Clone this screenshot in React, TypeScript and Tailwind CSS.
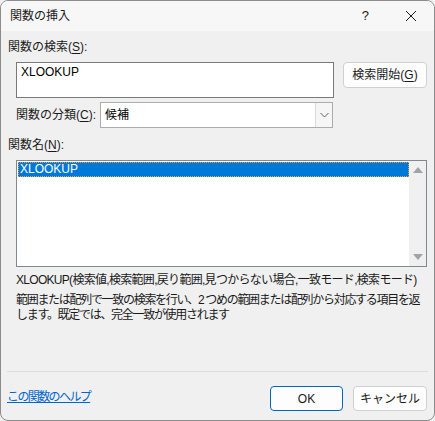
import React from 'react';

const font = { fontFamily: '"Liberation Sans", "Noto Sans CJK JP", sans-serif' };

// label with an underlined access key, e.g. 関数の検索(S):
const Label: React.FC<{ text: string; k: string; className?: string }> = ({ text, k, className = '' }) => (
  <div className={`text-[12px] leading-[15px] text-[#1a1a1a] whitespace-nowrap ${className}`}>
    {text}(<span className="underline underline-offset-2">{k}</span>):
  </div>
);

const App: React.FC = () => {
  return (
    <div className="w-[435px] h-[421px] bg-[#f0f0f0]" style={font}>
      <div className="w-full h-full flex flex-col border border-[#8c8c8c] rounded-[8px] overflow-hidden">
        {/* Title bar */}
        <div className="h-[30px] shrink-0 bg-[#f7f7f7] flex items-center pl-[9px] pr-[12px]">
          <span className="text-[12px] text-[#1a1a1a]">関数の挿入</span>
          <span className="ml-auto text-[13px] text-[#1a1a1a] mr-[36px]">?</span>
          <svg width="12" height="12" viewBox="0 0 12 12" className="mr-[5px]">
            <path d="M1 1L11 11M11 1L1 11" stroke="#1a1a1a" strokeWidth="1" />
          </svg>
        </div>

        {/* Body */}
        <div className="flex-1 flex flex-col pl-[7px] pr-[7px]">
          <Label text="関数の検索" k="S" className="mt-[9px]" />

          <div className="flex items-start mt-[7px] ml-[8px]">
            <div className="w-[318px] h-[36px] bg-white border border-[#7a7a7a] pl-[4px] pt-[2px] text-[12px] leading-[15px] text-black">
              XLOOKUP
            </div>
            <button className="ml-[9px] w-[84px] h-[26px] bg-[#fdfdfd] border border-[#d0d0d0] rounded-[4px] text-[12px] text-[#1a1a1a]">
              検索開始(<span className="underline underline-offset-2">G</span>)
            </button>
          </div>

          <div className="flex items-center mt-[4px] ml-[8px]">
            <Label text="関数の分類" k="C" className="w-[84px]" />
            <div className="w-[233px] h-[26px] bg-white border border-[#acacac] flex items-center">
              <span className="pl-[4px] text-[12px] text-black">候補</span>
              <div className="ml-auto h-full w-[17px] bg-[#f6f6f6] border-l border-[#dadada] flex items-center justify-center">
                <svg width="9" height="6" viewBox="0 0 9 6">
                  <path d="M0.5 1L4.5 5L8.5 1" fill="none" stroke="#606060" strokeWidth="1" />
                </svg>
              </div>
            </div>
          </div>

          <Label text="関数名" k="N" className="mt-[10px]" />

          <div className="mt-[7px] ml-[8px] w-[411px] h-[107px] bg-white border border-[#828790] flex">
            <div className="flex-1 pl-[1px] pt-[1px]">
              <div className="h-[15px] bg-[#0078d7] outline outline-1 outline-dotted outline-[#f0a030] -outline-offset-1 text-white text-[12px] leading-[15px] pl-[2px]">
                XLOOKUP
              </div>
            </div>
            <div className="w-[17px] bg-[#f0f0f0] flex flex-col items-center justify-between py-[6px]">
              <svg width="10" height="6" viewBox="0 0 10 6">
                <path d="M5 0L10 6H0Z" fill="#a3a3a3" />
              </svg>
              <svg width="10" height="6" viewBox="0 0 10 6">
                <path d="M0 0H10L5 6Z" fill="#a3a3a3" />
              </svg>
            </div>
          </div>

          <div className="ml-[8px] mt-[6px] text-[12px] leading-[15px] text-[#1a1a1a] whitespace-nowrap">
            <div className="mb-[5px] tracking-[-0.7px]">XLOOKUP(検索値,検索範囲,戻り範囲,見つからない場合,一致モード,検索モード)</div>
            <div className="tracking-[-1.3px]">範囲または配列で一致の検索を行い、2 つめの範囲または配列から対応する項目を返</div>
            <div className="tracking-[-1.3px]">します。既定では、完全一致が使用されます</div>
          </div>

          <div className="flex-1" />
        </div>

        {/* Footer */}
        <div className="mx-[6px] border-t border-[#dcdcdc]" />
        <div className="h-[48px] shrink-0 flex items-start pt-[14px] pl-[6px] pr-[7px]">
          <a href="#" className="mt-[4px] text-[12px] leading-[15px] text-[#0066cc] underline tracking-[-1.6px]">
            この関数のヘルプ
          </a>
          <button className="ml-auto w-[73px] h-[25px] bg-[#fdfdfd] border border-[#0067c0] rounded-[4px] text-[12px] text-[#1a1a1a]">
            OK
          </button>
          <button className="ml-[10px] w-[74px] h-[25px] bg-[#fdfdfd] border border-[#d0d0d0] rounded-[4px] text-[12px] text-[#1a1a1a]">
            キャンセル
          </button>
        </div>
      </div>
    </div>
  );
};

export default App;
